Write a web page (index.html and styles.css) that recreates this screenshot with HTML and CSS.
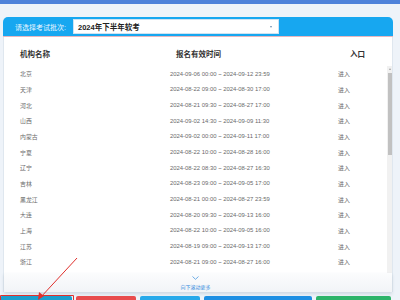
FILE: index.html
```html
<!DOCTYPE html>
<html lang="zh-CN">
<head>
<meta charset="utf-8">
<link rel="stylesheet" href="styles.css">
</head>
<body>
<div class="topbar"></div>
<div class="panel">
  <div class="panel-head">
    <span class="label">请选择考试批次:</span>
    <div class="select"><span class="select-text">2024年下半年软考</span><span class="caret"></span></div>
  </div>
  <div class="panel-body">
    <div class="thead">
      <span class="h1">机构名称</span>
      <span class="h2">报名有效时间</span>
      <span class="h3">入口</span>
    </div>
    <div class="tbody-wrap">
      <div class="tbody">
        <div class="row"><span class="c1">北京</span><span class="c2">2024-09-06 00:00 ~ 2024-09-12 23:59</span><span class="c3">进入</span></div>
        <div class="row"><span class="c1">天津</span><span class="c2">2024-08-22 09:00 ~ 2024-08-30 17:00</span><span class="c3">进入</span></div>
        <div class="row"><span class="c1">河北</span><span class="c2">2024-08-21 09:30 ~ 2024-08-27 17:00</span><span class="c3">进入</span></div>
        <div class="row"><span class="c1">山西</span><span class="c2">2024-09-02 14:30 ~ 2024-09-09 11:30</span><span class="c3">进入</span></div>
        <div class="row"><span class="c1">内蒙古</span><span class="c2">2024-09-02 00:00 ~ 2024-09-11 17:00</span><span class="c3">进入</span></div>
        <div class="row"><span class="c1">宁夏</span><span class="c2">2024-08-22 10:00 ~ 2024-08-28 16:00</span><span class="c3">进入</span></div>
        <div class="row"><span class="c1">辽宁</span><span class="c2">2024-08-22 08:30 ~ 2024-08-27 16:30</span><span class="c3">进入</span></div>
        <div class="row"><span class="c1">吉林</span><span class="c2">2024-08-23 09:00 ~ 2024-09-05 17:00</span><span class="c3">进入</span></div>
        <div class="row"><span class="c1">黑龙江</span><span class="c2">2024-08-21 00:00 ~ 2024-08-27 23:59</span><span class="c3">进入</span></div>
        <div class="row"><span class="c1">大连</span><span class="c2">2024-08-20 09:30 ~ 2024-09-13 16:00</span><span class="c3">进入</span></div>
        <div class="row"><span class="c1">上海</span><span class="c2">2024-08-22 10:00 ~ 2024-09-05 16:00</span><span class="c3">进入</span></div>
        <div class="row"><span class="c1">江苏</span><span class="c2">2024-08-19 09:00 ~ 2024-09-13 17:00</span><span class="c3">进入</span></div>
        <div class="row"><span class="c1">浙江</span><span class="c2">2024-08-21 09:00 ~ 2024-08-27 16:00</span><span class="c3">进入</span></div>
      </div>
      <div class="scrollbar">
        <span class="sb-up"></span>
        <span class="sb-thumb"></span>
      </div>
    </div>
    <div class="more">
      <svg class="chev" width="7" height="4" viewBox="0 0 7 4"><path d="M0.5 0.5 L3.5 3.3 L6.5 0.5" fill="none" stroke="#4a9be0" stroke-width="0.8"/></svg>
      <span class="more-text">向下滚动更多</span>
    </div>
  </div>
</div>
<div class="buttons">
  <div class="btn b1"></div>
  <div class="btn b2"></div>
  <div class="btn b3"></div>
  <div class="btn b4"></div>
  <div class="btn b5"></div>
</div>
<svg class="annot" width="400" height="300" viewBox="0 0 400 300">
  <line x1="77" y1="258" x2="40" y2="298" stroke="#e0302c" stroke-width="1"/>
  <path d="M38 300 L39 292 L44 296 Z" fill="#e0302c"/>
  <path d="M0.5 300 L0.5 295.5 L73.5 295.5 L73.5 300" fill="none" stroke="#e0302c" stroke-width="1"/>
</svg>
</body>
</html>
```
FILE: styles.css
```css
* { box-sizing: border-box; }
html, body { margin: 0; padding: 0; }
body {
  width: 400px;
  height: 300px;
  overflow: hidden;
  background: #eef3f9;
  font-family: "Liberation Sans", "Noto Sans CJK SC", sans-serif;
  position: relative;
}
.topbar {
  height: 4px;
  background: #4e82da;
}
.panel {
  margin: 13px 7px 0 3px;
  width: 390px;
}
.panel-head {
  height: 20px;
  background: #17a7f0;
  border-radius: 5px 5px 0 0;
  display: flex;
  align-items: center;
  padding-left: 12px;
  border-bottom: 1px solid #e7b7bf;
}
.label {
  color: #eaf6ff;
  font-size: 7px;
  width: 58px;
}
.select {
  width: 206px;
  height: 15px;
  background: #fff;
  border: 1px solid #cfe3f2;
  display: flex;
  align-items: center;
  padding-left: 4px;
  padding-right: 6px;
  justify-content: space-between;
}
.select-text {
  font-size: 7.5px;
  font-weight: bold;
  color: #222;
}
.caret {
  width: 0;
  height: 0;
  border-left: 1.6px solid transparent;
  border-right: 1.6px solid transparent;
  border-top: 2px solid #6d8fb0;
}
.panel-body {
  background: #fff;
  border-left: 1px solid #dfe7ef;
  border-right: 1px solid #dfe7ef;
  height: 255px;
  display: flex;
  flex-direction: column;
}
.thead {
  height: 29px;
  flex: none;
  display: grid;
  grid-template-columns: 169px 173px 1fr;
  align-items: center;
  padding-top: 3px;
  font-size: 7.5px;
  color: #333;
  font-weight: 600;
}
.h1 { padding-left: 16px; }
.h2 { padding-left: 3px; }
.h3 { padding-left: 4px; }
.tbody-wrap {
  height: 207px;
  flex: none;
  display: flex;
  overflow: hidden;
}
.tbody {
  flex: 1;
}
.row {
  height: 15.67px;
  display: grid;
  grid-template-columns: 166px 168px 1fr;
  align-items: center;
  font-size: 5.9px;
  color: #6a6a6a;
}
.c1 { padding-left: 16px; }
.scrollbar {
  width: 5px;
  flex: none;
  background: #f1f1f1;
  display: flex;
  flex-direction: column;
  align-items: center;
}
.sb-up {
  margin-top: 2px;
  width: 0;
  height: 0;
  border-left: 1.5px solid transparent;
  border-right: 1.5px solid transparent;
  border-bottom: 2px solid #a3a3a3;
}
.sb-thumb {
  margin-top: 3px;
  width: 4px;
  height: 82px;
  background: #c1c1c1;
}
.more {
  flex: 1;
  display: flex;
  flex-direction: column;
  align-items: center;
  background: linear-gradient(#fbfcfd, #f2f4f7);
  box-shadow: 0 2px 3px rgba(120,140,160,0.25);
  padding-top: 3px;
}
.chev { display: block; margin-left: -5px; }
.more-text {
  font-size: 5px;
  color: #3b8fe0;
  margin-top: 3px;
  margin-left: -5px;
}
.buttons {
  margin-top: 4px;
  display: flex;
  gap: 4px;
  padding-right: 7px;
}
.btn {
  height: 4px;
  border-radius: 2px 2px 0 0;
}
.b1 { width: 72px; background: #1c9fce; }
.b2 { width: 60px; background: #e84c4d; }
.b3 { width: 60px; background: #27a9ea; }
.b4 { width: 108px; background: #1e8fe3; }
.b5 { width: 75px; background: #2db46a; }
.annot {
  position: absolute;
  left: 0;
  top: 0;
  pointer-events: none;
}
```
